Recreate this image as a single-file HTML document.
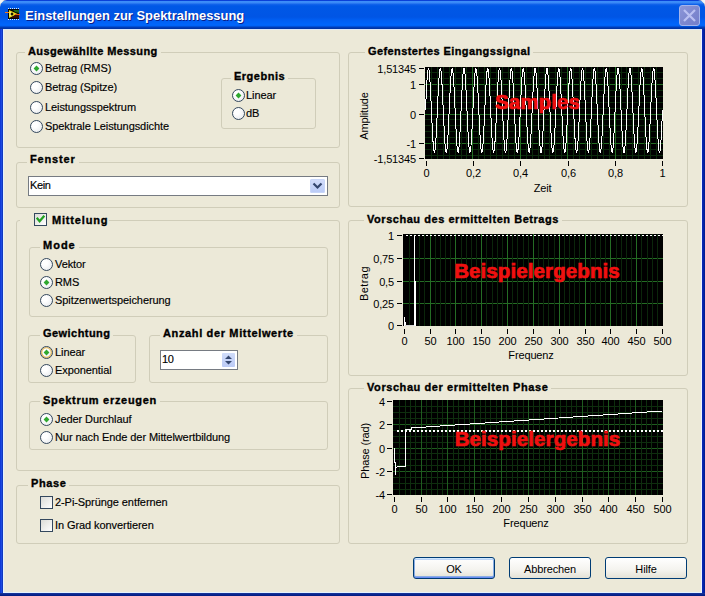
<!DOCTYPE html><html><head><meta charset="utf-8"><style>
*{margin:0;padding:0;box-sizing:border-box}
html,body{width:705px;height:596px;overflow:hidden;background:#ECE9D8}
body{position:relative;font-family:"Liberation Sans",sans-serif;font-size:11px;color:#000}
div,svg{position:absolute}
#tb{left:0;top:0;width:705px;height:29px;border-radius:7px 7px 0 0;
background:linear-gradient(180deg,#0A40D8 0px,#0A40D8 1px,#3D8FFA 1px,#3A88F5 3px,#1565EC 4px,#0058E6 6px,#0055E5 17px,#005EF2 20px,#0066FC 25px,#0060F0 26px,#0040C0 27px,#00309A 29px)}
#title{left:25px;top:7px;line-height:18px;font-size:12.95px;font-weight:700;color:#fff;white-space:nowrap;text-shadow:1px 1px 0 #0A1E8A}
.gb{border:1px solid #D0CDB9;border-radius:3px}
.t,.b{line-height:13px;white-space:nowrap}
.t{letter-spacing:-0.08px;-webkit-text-stroke:0.15px #000}
.b{font-weight:700;letter-spacing:0.55px;-webkit-text-stroke:0.35px #000}
.rd{width:13px;height:13px;border-radius:50%;border:1.2px solid #34485E;background:radial-gradient(circle at 35% 35%,#fff 25%,#EEF0F2 70%,#DCDCD4)}
.rd.hot{box-shadow:inset 0 0 0 1.3px #E8BE60}
.rd svg{left:-1px;top:-1px}
.cb{width:13px;height:13px;border:1px solid #34485E;background:linear-gradient(135deg,#DCDCD7,#fff)}
.combo{border:1px solid #767B82;background:#fff}
.cbtn{right:1px;top:1px;width:15px;height:16px;border:1px solid #B8C8F0;border-radius:2px;background:linear-gradient(180deg,#D8E4FE,#B6C9FA)}
.spin{right:2px;top:1px;width:13px;height:16px;border-radius:2px;background:linear-gradient(180deg,#D8E4FE,#B6C9FA)}
.btn{width:82px;height:22px;border:1px solid #003C74;border-radius:3px;background:linear-gradient(180deg,#FFFFFF,#F4F3EE 60%,#E4E2D6);text-align:center;line-height:22px;letter-spacing:-0.15px}
.btn.def{box-shadow:inset 0 1px 0 #CEE7FF,inset 0 -1px 0 #698CF2,inset 1px 0 0 #89ADE4,inset -1px 0 0 #89ADE4,inset 0 2px 0 #BCD4F6,inset 0 -2px 0 #89ADE4}
.ax{font-family:"Liberation Sans";font-size:11px;letter-spacing:-0.15px;fill:#000}
.red{font-family:"Liberation Sans";font-size:20.5px;font-weight:700;fill:#F01010;stroke:#F01010;stroke-width:0.7px;letter-spacing:0.1px}
</style></head><body><div id="tb"></div>
<div style="position:absolute;left:0;top:29px;width:3px;height:564px;background:linear-gradient(90deg,#0A32D4,#1C4AE0 50%,#0C30B0)"></div>
<div style="position:absolute;left:702px;top:29px;width:3px;height:564px;background:linear-gradient(90deg,#0A2AB8,#0424A8,#001B8E)"></div>
<div style="position:absolute;left:0;top:593px;width:705px;height:3px;background:linear-gradient(180deg,#1A3A9A,#0A2590,#001A80)"></div>
<div style="position:absolute;left:3px;top:29px;width:1px;height:564px;background:#E4F2FF"></div>
<div style="position:absolute;left:701px;top:29px;width:1px;height:564px;background:#EEF4FF"></div>
<div style="position:absolute;left:3px;top:592px;width:699px;height:1px;background:#E4F2FF"></div>
<div style="position:absolute;left:3px;top:29px;width:699px;height:1px;background:#DDE8F8"></div>
<svg style="position:absolute;left:0;top:0" width="24" height="24">
<rect x="8" y="9" width="11" height="10" fill="#050505"/>
<path d="M13 10 L19 10 L19 13 L15 12Z" fill="#1E6A1E"/>
<path d="M9 10 L17.5 14 L9 18 Z" fill="#F0DC18"/>
<path d="M9.5 11.5 L14 14 L9.5 16.5 Z" fill="#FFF27A"/>
<path d="M15 15 L19 15 L19 18 L11 18Z" fill="#3A0A05"/>
<rect x="5" y="12" width="4" height="1" fill="#F07A20"/>
<rect x="15" y="14" width="5" height="1" fill="#E0601A"/>
<path d="M12 12.3 L13.7 14 L12 15.7 L10.3 14Z" fill="#101000"/>
<g fill="#D8E8F8"><rect x="8" y="8" width="1" height="1"/><rect x="10" y="8" width="1" height="1"/><rect x="12" y="8" width="1" height="1"/><rect x="14" y="8" width="1" height="1"/><rect x="16" y="8" width="1" height="1"/><rect x="18" y="8" width="1" height="1"/>
<rect x="8" y="19" width="1" height="1"/><rect x="10" y="19" width="1" height="1"/><rect x="12" y="19" width="1" height="1"/><rect x="14" y="19" width="1" height="1"/><rect x="16" y="19" width="1" height="1"/><rect x="18" y="19" width="1" height="1"/></g>
</svg>
<div id="title">Einstellungen zur Spektralmessung</div>
<div style="position:absolute;left:679px;top:5px;width:21px;height:21px;border:1px solid #A4B4EC;border-radius:3px;background:linear-gradient(135deg,#8C96D8,#7C86CE 60%,#7480CC)"></div>
<svg style="position:absolute;left:679px;top:5px" width="21" height="21"><path d="M5 5 L16 16 M16 5 L5 16" stroke="#BAC0F2" stroke-width="2.2"/></svg>
<div style="position:absolute;left:0;top:0;width:3px;height:3px;background:#F4F4F4;border-bottom-right-radius:3px"></div>
<div style="position:absolute;left:702px;top:0;width:3px;height:3px;background:#F4F4F4;border-bottom-left-radius:3px"></div>
<div class="gb" style="left:16px;top:52px;width:324px;height:96px"></div>
<div class="b" style="left:25px;top:45px;"><span style="background:#ECE9D8;padding:0 3px;letter-spacing:0.4px">Ausgewähllte Messung</span></div>
<div class="rd" style="left:30px;top:62px"><svg width="13" height="13"><path d="M6.5 3.6 L9.4 6.5 L6.5 9.4 L3.6 6.5Z" fill="#2FA82F"/></svg></div>
<div class="t" style="left:45px;top:62px;">Betrag (RMS)</div>
<div class="rd" style="left:30px;top:81px"></div>
<div class="t" style="left:45px;top:81px;">Betrag (Spitze)</div>
<div class="rd" style="left:30px;top:101px"></div>
<div class="t" style="left:45px;top:101px;">Leistungsspektrum</div>
<div class="rd" style="left:30px;top:120px"></div>
<div class="t" style="left:45px;top:120px;">Spektrale Leistungsdichte</div>
<div class="gb" style="left:221px;top:78px;width:95px;height:51px"></div>
<div class="b" style="left:231px;top:70px;"><span style="background:#ECE9D8;padding:0 3px;letter-spacing:0.5px">Ergebnis</span></div>
<div class="rd" style="left:232px;top:89px"><svg width="13" height="13"><path d="M6.5 3.6 L9.4 6.5 L6.5 9.4 L3.6 6.5Z" fill="#2FA82F"/></svg></div>
<div class="t" style="left:246px;top:89px;">Linear</div>
<div class="rd" style="left:232px;top:107px"></div>
<div class="t" style="left:246px;top:107px;">dB</div>
<div class="gb" style="left:16px;top:162px;width:324px;height:46px"></div>
<div class="b" style="left:27px;top:153px;"><span style="background:#ECE9D8;padding:0 3px;letter-spacing:0.85px">Fenster</span></div>
<div class="combo" style="left:28px;top:176px;width:300px;height:20px"><span style="position:absolute;left:1px;top:2px;letter-spacing:-0.4px;-webkit-text-stroke:0.15px #000">Kein</span></div>
<div style="left:310px;top:179px;width:15px;height:14px;border-radius:2px;background:linear-gradient(180deg,#D4DEFB,#B9CAF6);box-shadow:inset 0 0 0 1px #C8D6F8"></div>
<svg style="left:310px;top:179px" width="15" height="14"><path d="M3.5 4.5 L7.5 8.5 L11.5 4.5" stroke="#34466E" stroke-width="2.2" fill="none"/></svg>
<div class="gb" style="left:16px;top:220px;width:324px;height:251px"></div>
<div style="position:absolute;left:20px;top:218px;width:34px;height:6px;background:#ECE9D8"></div>
<div class="cb" style="left:34px;top:213px"><svg width="11" height="11" style="position:absolute;left:0;top:0"><path d="M2.5 4.6 L4.6 7.2 L8.6 2.6" stroke="#21A121" stroke-width="2.3" fill="none" stroke-linecap="square"/></svg></div>
<div class="b" style="left:52px;top:214px;"><span style="background:#ECE9D8;padding:0 1px 0 0;letter-spacing:0.82px">Mittelung</span></div>
<div class="gb" style="left:29px;top:247px;width:299px;height:70px"></div>
<div class="b" style="left:40px;top:239px;"><span style="background:#ECE9D8;padding:0 3px;letter-spacing:1.0px">Mode</span></div>
<div class="rd" style="left:40px;top:258px"></div>
<div class="t" style="left:55px;top:258px;">Vektor</div>
<div class="rd" style="left:40px;top:276px"><svg width="13" height="13"><path d="M6.5 3.6 L9.4 6.5 L6.5 9.4 L3.6 6.5Z" fill="#2FA82F"/></svg></div>
<div class="t" style="left:55px;top:276px;">RMS</div>
<div class="rd" style="left:40px;top:294px"></div>
<div class="t" style="left:55px;top:294px;">Spitzenwertspeicherung</div>
<div class="gb" style="left:28px;top:335px;width:108px;height:48px"></div>
<div class="b" style="left:40px;top:327px;"><span style="background:#ECE9D8;padding:0 3px;letter-spacing:0.45px">Gewichtung</span></div>
<div class="rd hot" style="left:40px;top:346px"><svg width="13" height="13"><path d="M6.5 3.6 L9.4 6.5 L6.5 9.4 L3.6 6.5Z" fill="#2FA82F"/></svg></div>
<div class="t" style="left:55px;top:346px;">Linear</div>
<div class="rd" style="left:40px;top:364px"></div>
<div class="t" style="left:55px;top:364px;">Exponential</div>
<div class="gb" style="left:149px;top:335px;width:179px;height:48px"></div>
<div class="b" style="left:160px;top:327px;"><span style="background:#ECE9D8;padding:0 3px;letter-spacing:0.64px">Anzahl der Mittelwerte</span></div>
<div class="combo" style="left:160px;top:350px;width:78px;height:20px"><span style="position:absolute;left:1px;top:2px;letter-spacing:-0.3px;-webkit-text-stroke:0.15px #000">10</span></div>
<div style="left:222px;top:353px;width:13px;height:14px;border-radius:1px;background:linear-gradient(180deg,#D0DCFA,#BCCBF6)"></div>
<svg style="left:222px;top:353px" width="13" height="14"><path d="M3 6 L6.5 2.5 L10 6Z M3 8 L6.5 11.5 L10 8Z" fill="#34466E"/></svg>
<div class="gb" style="left:29px;top:401px;width:299px;height:49px"></div>
<div class="b" style="left:40px;top:394px;"><span style="background:#ECE9D8;padding:0 3px;letter-spacing:0.7px">Spektrum erzeugen</span></div>
<div class="rd" style="left:40px;top:413px"><svg width="13" height="13"><path d="M6.5 3.6 L9.4 6.5 L6.5 9.4 L3.6 6.5Z" fill="#2FA82F"/></svg></div>
<div class="t" style="left:55px;top:413px;">Jeder Durchlauf</div>
<div class="rd" style="left:40px;top:431px"></div>
<div class="t" style="left:55px;top:431px;">Nur nach Ende der Mittelwertbildung</div>
<div class="gb" style="left:16px;top:485px;width:324px;height:59px"></div>
<div class="b" style="left:28px;top:477px;"><span style="background:#ECE9D8;padding:0 3px;letter-spacing:0.6px">Phase</span></div>
<div class="cb" style="left:40px;top:496px"></div>
<div class="t" style="left:55px;top:496px;">2-Pi-Sprünge entfernen</div>
<div class="cb" style="left:40px;top:519px"></div>
<div class="t" style="left:55px;top:519px;">In Grad konvertieren</div>
<div class="gb" style="left:348px;top:52px;width:340px;height:155px"></div>
<div class="b" style="left:365px;top:45px;"><span style="background:#ECE9D8;padding:0 3px;letter-spacing:0.4px">Gefenstertes Eingangssignal</span></div>
<div class="gb" style="left:348px;top:220px;width:340px;height:156px"></div>
<div class="b" style="left:364px;top:213px;"><span style="background:#ECE9D8;padding:0 3px;letter-spacing:0.54px">Vorschau des ermittelten Betrags</span></div>
<div class="gb" style="left:348px;top:388px;width:340px;height:156px"></div>
<div class="b" style="left:364px;top:381px;"><span style="background:#ECE9D8;padding:0 3px;letter-spacing:0.57px">Vorschau der ermittelten Phase</span></div>
<div class="btn def" style="left:413px;top:557px"><span>OK</span></div>
<div class="btn" style="left:509px;top:557px"><span>Abbrechen</span></div>
<div class="btn" style="left:605px;top:557px"><span>Hilfe</span></div>
<svg style="left:0;top:0" width="705" height="596"><rect x="425" y="67" width="238" height="92" fill="#000"/>
<line x1="425" y1="155.5" x2="663" y2="155.5" stroke="#0C2A0C" stroke-width="1"/>
<line x1="425" y1="149.5" x2="663" y2="149.5" stroke="#0C2A0C" stroke-width="1"/>
<line x1="425" y1="143.5" x2="663" y2="143.5" stroke="#246C24" stroke-width="1"/>
<line x1="425" y1="137.5" x2="663" y2="137.5" stroke="#0C2A0C" stroke-width="1"/>
<line x1="425" y1="131.5" x2="663" y2="131.5" stroke="#0C2A0C" stroke-width="1"/>
<line x1="425" y1="125.5" x2="663" y2="125.5" stroke="#0C2A0C" stroke-width="1"/>
<line x1="425" y1="119.5" x2="663" y2="119.5" stroke="#0C2A0C" stroke-width="1"/>
<line x1="425" y1="114.5" x2="663" y2="114.5" stroke="#246C24" stroke-width="1"/>
<line x1="425" y1="108.5" x2="663" y2="108.5" stroke="#0C2A0C" stroke-width="1"/>
<line x1="425" y1="102.5" x2="663" y2="102.5" stroke="#0C2A0C" stroke-width="1"/>
<line x1="425" y1="96.5" x2="663" y2="96.5" stroke="#0C2A0C" stroke-width="1"/>
<line x1="425" y1="90.5" x2="663" y2="90.5" stroke="#0C2A0C" stroke-width="1"/>
<line x1="425" y1="84.5" x2="663" y2="84.5" stroke="#246C24" stroke-width="1"/>
<line x1="425" y1="78.5" x2="663" y2="78.5" stroke="#0C2A0C" stroke-width="1"/>
<line x1="425" y1="72.5" x2="663" y2="72.5" stroke="#0C2A0C" stroke-width="1"/>
<line x1="431.5" y1="67" x2="431.5" y2="159" stroke="#0C2A0C" stroke-width="1"/>
<line x1="437.5" y1="67" x2="437.5" y2="159" stroke="#0C2A0C" stroke-width="1"/>
<line x1="443.5" y1="67" x2="443.5" y2="159" stroke="#0C2A0C" stroke-width="1"/>
<line x1="449.5" y1="67" x2="449.5" y2="159" stroke="#0C2A0C" stroke-width="1"/>
<line x1="455.5" y1="67" x2="455.5" y2="159" stroke="#0C2A0C" stroke-width="1"/>
<line x1="461.5" y1="67" x2="461.5" y2="159" stroke="#0C2A0C" stroke-width="1"/>
<line x1="466.5" y1="67" x2="466.5" y2="159" stroke="#0C2A0C" stroke-width="1"/>
<line x1="472.5" y1="67" x2="472.5" y2="159" stroke="#246C24" stroke-width="1"/>
<line x1="478.5" y1="67" x2="478.5" y2="159" stroke="#0C2A0C" stroke-width="1"/>
<line x1="484.5" y1="67" x2="484.5" y2="159" stroke="#0C2A0C" stroke-width="1"/>
<line x1="490.5" y1="67" x2="490.5" y2="159" stroke="#0C2A0C" stroke-width="1"/>
<line x1="496.5" y1="67" x2="496.5" y2="159" stroke="#0C2A0C" stroke-width="1"/>
<line x1="502.5" y1="67" x2="502.5" y2="159" stroke="#0C2A0C" stroke-width="1"/>
<line x1="508.5" y1="67" x2="508.5" y2="159" stroke="#0C2A0C" stroke-width="1"/>
<line x1="514.5" y1="67" x2="514.5" y2="159" stroke="#0C2A0C" stroke-width="1"/>
<line x1="520.5" y1="67" x2="520.5" y2="159" stroke="#246C24" stroke-width="1"/>
<line x1="526.5" y1="67" x2="526.5" y2="159" stroke="#0C2A0C" stroke-width="1"/>
<line x1="532.5" y1="67" x2="532.5" y2="159" stroke="#0C2A0C" stroke-width="1"/>
<line x1="538.5" y1="67" x2="538.5" y2="159" stroke="#0C2A0C" stroke-width="1"/>
<line x1="544.5" y1="67" x2="544.5" y2="159" stroke="#0C2A0C" stroke-width="1"/>
<line x1="549.5" y1="67" x2="549.5" y2="159" stroke="#0C2A0C" stroke-width="1"/>
<line x1="555.5" y1="67" x2="555.5" y2="159" stroke="#0C2A0C" stroke-width="1"/>
<line x1="561.5" y1="67" x2="561.5" y2="159" stroke="#0C2A0C" stroke-width="1"/>
<line x1="567.5" y1="67" x2="567.5" y2="159" stroke="#246C24" stroke-width="1"/>
<line x1="573.5" y1="67" x2="573.5" y2="159" stroke="#0C2A0C" stroke-width="1"/>
<line x1="579.5" y1="67" x2="579.5" y2="159" stroke="#0C2A0C" stroke-width="1"/>
<line x1="585.5" y1="67" x2="585.5" y2="159" stroke="#0C2A0C" stroke-width="1"/>
<line x1="591.5" y1="67" x2="591.5" y2="159" stroke="#0C2A0C" stroke-width="1"/>
<line x1="597.5" y1="67" x2="597.5" y2="159" stroke="#0C2A0C" stroke-width="1"/>
<line x1="603.5" y1="67" x2="603.5" y2="159" stroke="#0C2A0C" stroke-width="1"/>
<line x1="609.5" y1="67" x2="609.5" y2="159" stroke="#0C2A0C" stroke-width="1"/>
<line x1="615.5" y1="67" x2="615.5" y2="159" stroke="#246C24" stroke-width="1"/>
<line x1="621.5" y1="67" x2="621.5" y2="159" stroke="#0C2A0C" stroke-width="1"/>
<line x1="626.5" y1="67" x2="626.5" y2="159" stroke="#0C2A0C" stroke-width="1"/>
<line x1="632.5" y1="67" x2="632.5" y2="159" stroke="#0C2A0C" stroke-width="1"/>
<line x1="638.5" y1="67" x2="638.5" y2="159" stroke="#0C2A0C" stroke-width="1"/>
<line x1="644.5" y1="67" x2="644.5" y2="159" stroke="#0C2A0C" stroke-width="1"/>
<line x1="650.5" y1="67" x2="650.5" y2="159" stroke="#0C2A0C" stroke-width="1"/>
<line x1="656.5" y1="67" x2="656.5" y2="159" stroke="#0C2A0C" stroke-width="1"/>
<polyline points="425.50,110.38 425.74,105.13 425.97,99.97 426.21,94.97 426.45,90.21 426.69,85.77 426.92,81.71 427.16,78.11 427.40,75.02 427.63,72.49 427.87,70.55 428.11,69.25 428.34,68.59 428.58,68.59 428.82,69.25 429.06,70.55 429.29,72.49 429.53,75.02 429.77,78.11 430.00,81.71 430.24,85.77 430.48,90.21 430.71,94.97 430.95,99.97 431.19,105.13 431.43,110.38 431.66,115.63 431.90,120.80 432.14,125.80 432.37,130.56 432.61,135.00 432.85,139.05 433.08,142.65 433.32,145.74 433.56,148.27 433.80,150.21 434.03,151.52 434.27,152.18 434.51,152.18 434.74,151.52 434.98,150.21 435.22,148.27 435.45,145.74 435.69,142.65 435.93,139.05 436.17,135.00 436.40,130.56 436.64,125.80 436.88,120.80 437.11,115.63 437.35,110.38 437.59,105.13 437.82,99.97 438.06,94.97 438.30,90.21 438.54,85.77 438.77,81.71 439.01,78.11 439.25,75.02 439.48,72.49 439.72,70.55 439.96,69.25 440.19,68.59 440.43,68.59 440.67,69.25 440.90,70.55 441.14,72.49 441.38,75.02 441.62,78.11 441.85,81.71 442.09,85.77 442.33,90.21 442.56,94.97 442.80,99.97 443.04,105.13 443.27,110.38 443.51,115.63 443.75,120.80 443.99,125.80 444.22,130.56 444.46,135.00 444.70,139.05 444.93,142.65 445.17,145.74 445.41,148.27 445.64,150.21 445.88,151.52 446.12,152.18 446.36,152.18 446.59,151.52 446.83,150.21 447.07,148.27 447.30,145.74 447.54,142.65 447.78,139.05 448.01,135.00 448.25,130.56 448.49,125.80 448.73,120.80 448.96,115.63 449.20,110.38 449.44,105.13 449.67,99.97 449.91,94.97 450.15,90.21 450.38,85.77 450.62,81.71 450.86,78.11 451.10,75.02 451.33,72.49 451.57,70.55 451.81,69.25 452.04,68.59 452.28,68.59 452.52,69.25 452.75,70.55 452.99,72.49 453.23,75.02 453.47,78.11 453.70,81.71 453.94,85.77 454.18,90.21 454.41,94.97 454.65,99.97 454.89,105.13 455.12,110.38 455.36,115.63 455.60,120.80 455.84,125.80 456.07,130.56 456.31,135.00 456.55,139.05 456.78,142.65 457.02,145.74 457.26,148.27 457.50,150.21 457.73,151.52 457.97,152.18 458.21,152.18 458.44,151.52 458.68,150.21 458.92,148.27 459.15,145.74 459.39,142.65 459.63,139.05 459.87,135.00 460.10,130.56 460.34,125.80 460.58,120.80 460.81,115.63 461.05,110.38 461.29,105.13 461.52,99.97 461.76,94.97 462.00,90.21 462.24,85.77 462.47,81.71 462.71,78.11 462.95,75.02 463.18,72.49 463.42,70.55 463.66,69.25 463.89,68.59 464.13,68.59 464.37,69.25 464.61,70.55 464.84,72.49 465.08,75.02 465.32,78.11 465.55,81.71 465.79,85.77 466.03,90.21 466.26,94.97 466.50,99.97 466.74,105.13 466.98,110.38 467.21,115.63 467.45,120.80 467.69,125.80 467.92,130.56 468.16,135.00 468.40,139.05 468.63,142.65 468.87,145.74 469.11,148.27 469.35,150.21 469.58,151.52 469.82,152.18 470.06,152.18 470.29,151.52 470.53,150.21 470.77,148.27 471.00,145.74 471.24,142.65 471.48,139.05 471.72,135.00 471.95,130.56 472.19,125.80 472.43,120.80 472.66,115.63 472.90,110.38 473.14,105.13 473.37,99.97 473.61,94.97 473.85,90.21 474.08,85.77 474.32,81.71 474.56,78.11 474.80,75.02 475.03,72.49 475.27,70.55 475.51,69.25 475.74,68.59 475.98,68.59 476.22,69.25 476.45,70.55 476.69,72.49 476.93,75.02 477.17,78.11 477.40,81.71 477.64,85.77 477.88,90.21 478.11,94.97 478.35,99.97 478.59,105.13 478.82,110.38 479.06,115.63 479.30,120.80 479.54,125.80 479.77,130.56 480.01,135.00 480.25,139.05 480.48,142.65 480.72,145.74 480.96,148.27 481.19,150.21 481.43,151.52 481.67,152.18 481.91,152.18 482.14,151.52 482.38,150.21 482.62,148.27 482.85,145.74 483.09,142.65 483.33,139.05 483.56,135.00 483.80,130.56 484.04,125.80 484.28,120.80 484.51,115.63 484.75,110.38 484.99,105.13 485.22,99.97 485.46,94.97 485.70,90.21 485.94,85.77 486.17,81.71 486.41,78.11 486.65,75.02 486.88,72.49 487.12,70.55 487.36,69.25 487.59,68.59 487.83,68.59 488.07,69.25 488.31,70.55 488.54,72.49 488.78,75.02 489.02,78.11 489.25,81.71 489.49,85.77 489.73,90.21 489.96,94.97 490.20,99.97 490.44,105.13 490.68,110.38 490.91,115.63 491.15,120.80 491.39,125.80 491.62,130.56 491.86,135.00 492.10,139.05 492.33,142.65 492.57,145.74 492.81,148.27 493.04,150.21 493.28,151.52 493.52,152.18 493.76,152.18 493.99,151.52 494.23,150.21 494.47,148.27 494.70,145.74 494.94,142.65 495.18,139.05 495.41,135.00 495.65,130.56 495.89,125.80 496.13,120.80 496.36,115.63 496.60,110.38 496.84,105.13 497.07,99.97 497.31,94.97 497.55,90.21 497.78,85.77 498.02,81.71 498.26,78.11 498.50,75.02 498.73,72.49 498.97,70.55 499.21,69.25 499.44,68.59 499.68,68.59 499.92,69.25 500.15,70.55 500.39,72.49 500.63,75.02 500.87,78.11 501.10,81.71 501.34,85.77 501.58,90.21 501.81,94.97 502.05,99.97 502.29,105.13 502.52,110.38 502.76,115.63 503.00,120.80 503.24,125.80 503.47,130.56 503.71,135.00 503.95,139.05 504.18,142.65 504.42,145.74 504.66,148.27 504.89,150.21 505.13,151.52 505.37,152.18 505.61,152.18 505.84,151.52 506.08,150.21 506.32,148.27 506.55,145.74 506.79,142.65 507.03,139.05 507.26,135.00 507.50,130.56 507.74,125.80 507.98,120.80 508.21,115.63 508.45,110.38 508.69,105.13 508.92,99.97 509.16,94.97 509.40,90.21 509.63,85.77 509.87,81.71 510.11,78.11 510.35,75.02 510.58,72.49 510.82,70.55 511.06,69.25 511.29,68.59 511.53,68.59 511.77,69.25 512.00,70.55 512.24,72.49 512.48,75.02 512.72,78.11 512.95,81.71 513.19,85.77 513.43,90.21 513.66,94.97 513.90,99.97 514.14,105.13 514.38,110.38 514.61,115.63 514.85,120.80 515.09,125.80 515.32,130.56 515.56,135.00 515.80,139.05 516.03,142.65 516.27,145.74 516.51,148.27 516.75,150.21 516.98,151.52 517.22,152.18 517.46,152.18 517.69,151.52 517.93,150.21 518.17,148.27 518.40,145.74 518.64,142.65 518.88,139.05 519.12,135.00 519.35,130.56 519.59,125.80 519.83,120.80 520.06,115.63 520.30,110.38 520.54,105.13 520.77,99.97 521.01,94.97 521.25,90.21 521.49,85.77 521.72,81.71 521.96,78.11 522.20,75.02 522.43,72.49 522.67,70.55 522.91,69.25 523.14,68.59 523.38,68.59 523.62,69.25 523.86,70.55 524.09,72.49 524.33,75.02 524.57,78.11 524.80,81.71 525.04,85.77 525.28,90.21 525.51,94.97 525.75,99.97 525.99,105.13 526.23,110.38 526.46,115.63 526.70,120.80 526.94,125.80 527.17,130.56 527.41,135.00 527.65,139.05 527.88,142.65 528.12,145.74 528.36,148.27 528.60,150.21 528.83,151.52 529.07,152.18 529.31,152.18 529.54,151.52 529.78,150.21 530.02,148.27 530.25,145.74 530.49,142.65 530.73,139.05 530.97,135.00 531.20,130.56 531.44,125.80 531.68,120.80 531.91,115.63 532.15,110.38 532.39,105.13 532.62,99.97 532.86,94.97 533.10,90.21 533.34,85.77 533.57,81.71 533.81,78.11 534.05,75.02 534.28,72.49 534.52,70.55 534.76,69.25 534.99,68.59 535.23,68.59 535.47,69.25 535.71,70.55 535.94,72.49 536.18,75.02 536.42,78.11 536.65,81.71 536.89,85.77 537.13,90.21 537.36,94.97 537.60,99.97 537.84,105.13 538.08,110.38 538.31,115.63 538.55,120.80 538.79,125.80 539.02,130.56 539.26,135.00 539.50,139.05 539.73,142.65 539.97,145.74 540.21,148.27 540.44,150.21 540.68,151.52 540.92,152.18 541.16,152.18 541.39,151.52 541.63,150.21 541.87,148.27 542.10,145.74 542.34,142.65 542.58,139.05 542.82,135.00 543.05,130.56 543.29,125.80 543.53,120.80 543.76,115.63 544.00,110.38 544.24,105.13 544.47,99.97 544.71,94.97 544.95,90.21 545.18,85.77 545.42,81.71 545.66,78.11 545.90,75.02 546.13,72.49 546.37,70.55 546.61,69.25 546.84,68.59 547.08,68.59 547.32,69.25 547.56,70.55 547.79,72.49 548.03,75.02 548.27,78.11 548.50,81.71 548.74,85.77 548.98,90.21 549.21,94.97 549.45,99.97 549.69,105.13 549.92,110.38 550.16,115.63 550.40,120.80 550.64,125.80 550.87,130.56 551.11,135.00 551.35,139.05 551.58,142.65 551.82,145.74 552.06,148.27 552.29,150.21 552.53,151.52 552.77,152.18 553.01,152.18 553.24,151.52 553.48,150.21 553.72,148.27 553.95,145.74 554.19,142.65 554.43,139.05 554.66,135.00 554.90,130.56 555.14,125.80 555.38,120.80 555.61,115.63 555.85,110.38 556.09,105.13 556.32,99.97 556.56,94.97 556.80,90.21 557.04,85.77 557.27,81.71 557.51,78.11 557.75,75.02 557.98,72.49 558.22,70.55 558.46,69.25 558.69,68.59 558.93,68.59 559.17,69.25 559.40,70.55 559.64,72.49 559.88,75.02 560.12,78.11 560.35,81.71 560.59,85.77 560.83,90.21 561.06,94.97 561.30,99.97 561.54,105.13 561.77,110.38 562.01,115.63 562.25,120.80 562.49,125.80 562.72,130.56 562.96,135.00 563.20,139.05 563.43,142.65 563.67,145.74 563.91,148.27 564.14,150.21 564.38,151.52 564.62,152.18 564.86,152.18 565.09,151.52 565.33,150.21 565.57,148.27 565.80,145.74 566.04,142.65 566.28,139.05 566.51,135.00 566.75,130.56 566.99,125.80 567.23,120.80 567.46,115.63 567.70,110.38 567.94,105.13 568.17,99.97 568.41,94.97 568.65,90.21 568.88,85.77 569.12,81.71 569.36,78.11 569.60,75.02 569.83,72.49 570.07,70.55 570.31,69.25 570.54,68.59 570.78,68.59 571.02,69.25 571.25,70.55 571.49,72.49 571.73,75.02 571.97,78.11 572.20,81.71 572.44,85.77 572.68,90.21 572.91,94.97 573.15,99.97 573.39,105.13 573.62,110.38 573.86,115.63 574.10,120.80 574.34,125.80 574.57,130.56 574.81,135.00 575.05,139.05 575.28,142.65 575.52,145.74 575.76,148.27 576.00,150.21 576.23,151.52 576.47,152.18 576.71,152.18 576.94,151.52 577.18,150.21 577.42,148.27 577.65,145.74 577.89,142.65 578.13,139.05 578.37,135.00 578.60,130.56 578.84,125.80 579.08,120.80 579.31,115.63 579.55,110.38 579.79,105.13 580.02,99.97 580.26,94.97 580.50,90.21 580.74,85.77 580.97,81.71 581.21,78.11 581.45,75.02 581.68,72.49 581.92,70.55 582.16,69.25 582.39,68.59 582.63,68.59 582.87,69.25 583.11,70.55 583.34,72.49 583.58,75.02 583.82,78.11 584.05,81.71 584.29,85.77 584.53,90.21 584.76,94.97 585.00,99.97 585.24,105.13 585.48,110.38 585.71,115.63 585.95,120.80 586.19,125.80 586.42,130.56 586.66,135.00 586.90,139.05 587.13,142.65 587.37,145.74 587.61,148.27 587.85,150.21 588.08,151.52 588.32,152.18 588.56,152.18 588.79,151.52 589.03,150.21 589.27,148.27 589.50,145.74 589.74,142.65 589.98,139.05 590.21,135.00 590.45,130.56 590.69,125.80 590.93,120.80 591.16,115.63 591.40,110.38 591.64,105.13 591.87,99.97 592.11,94.97 592.35,90.21 592.59,85.77 592.82,81.71 593.06,78.11 593.30,75.02 593.53,72.49 593.77,70.55 594.01,69.25 594.24,68.59 594.48,68.59 594.72,69.25 594.95,70.55 595.19,72.49 595.43,75.02 595.67,78.11 595.90,81.71 596.14,85.77 596.38,90.21 596.61,94.97 596.85,99.97 597.09,105.13 597.33,110.38 597.56,115.63 597.80,120.80 598.04,125.80 598.27,130.56 598.51,135.00 598.75,139.05 598.98,142.65 599.22,145.74 599.46,148.27 599.69,150.21 599.93,151.52 600.17,152.18 600.41,152.18 600.64,151.52 600.88,150.21 601.12,148.27 601.35,145.74 601.59,142.65 601.83,139.05 602.07,135.00 602.30,130.56 602.54,125.80 602.78,120.80 603.01,115.63 603.25,110.38 603.49,105.13 603.72,99.97 603.96,94.97 604.20,90.21 604.43,85.77 604.67,81.71 604.91,78.11 605.15,75.02 605.38,72.49 605.62,70.55 605.86,69.25 606.09,68.59 606.33,68.59 606.57,69.25 606.81,70.55 607.04,72.49 607.28,75.02 607.52,78.11 607.75,81.71 607.99,85.77 608.23,90.21 608.46,94.97 608.70,99.97 608.94,105.13 609.17,110.38 609.41,115.63 609.65,120.80 609.89,125.80 610.12,130.56 610.36,135.00 610.60,139.05 610.83,142.65 611.07,145.74 611.31,148.27 611.55,150.21 611.78,151.52 612.02,152.18 612.26,152.18 612.49,151.52 612.73,150.21 612.97,148.27 613.20,145.74 613.44,142.65 613.68,139.05 613.91,135.00 614.15,130.56 614.39,125.80 614.63,120.80 614.86,115.63 615.10,110.38 615.34,105.13 615.57,99.97 615.81,94.97 616.05,90.21 616.29,85.77 616.52,81.71 616.76,78.11 617.00,75.02 617.23,72.49 617.47,70.55 617.71,69.25 617.94,68.59 618.18,68.59 618.42,69.25 618.65,70.55 618.89,72.49 619.13,75.02 619.37,78.11 619.60,81.71 619.84,85.77 620.08,90.21 620.31,94.97 620.55,99.97 620.79,105.13 621.02,110.38 621.26,115.63 621.50,120.80 621.74,125.80 621.97,130.56 622.21,135.00 622.45,139.05 622.68,142.65 622.92,145.74 623.16,148.27 623.39,150.21 623.63,151.52 623.87,152.18 624.11,152.18 624.34,151.52 624.58,150.21 624.82,148.27 625.05,145.74 625.29,142.65 625.53,139.05 625.76,135.00 626.00,130.56 626.24,125.80 626.48,120.80 626.71,115.63 626.95,110.38 627.19,105.13 627.42,99.97 627.66,94.97 627.90,90.21 628.13,85.77 628.37,81.71 628.61,78.11 628.85,75.02 629.08,72.49 629.32,70.55 629.56,69.25 629.79,68.59 630.03,68.59 630.27,69.25 630.50,70.55 630.74,72.49 630.98,75.02 631.22,78.11 631.45,81.71 631.69,85.77 631.93,90.21 632.16,94.97 632.40,99.97 632.64,105.13 632.88,110.38 633.11,115.63 633.35,120.80 633.59,125.80 633.82,130.56 634.06,135.00 634.30,139.05 634.53,142.65 634.77,145.74 635.01,148.27 635.25,150.21 635.48,151.52 635.72,152.18 635.96,152.18 636.19,151.52 636.43,150.21 636.67,148.27 636.90,145.74 637.14,142.65 637.38,139.05 637.62,135.00 637.85,130.56 638.09,125.80 638.33,120.80 638.56,115.63 638.80,110.38 639.04,105.13 639.27,99.97 639.51,94.97 639.75,90.21 639.99,85.77 640.22,81.71 640.46,78.11 640.70,75.02 640.93,72.49 641.17,70.55 641.41,69.25 641.64,68.59 641.88,68.59 642.12,69.25 642.36,70.55 642.59,72.49 642.83,75.02 643.07,78.11 643.30,81.71 643.54,85.77 643.78,90.21 644.01,94.97 644.25,99.97 644.49,105.13 644.73,110.38 644.96,115.63 645.20,120.80 645.44,125.80 645.67,130.56 645.91,135.00 646.15,139.05 646.38,142.65 646.62,145.74 646.86,148.27 647.10,150.21 647.33,151.52 647.57,152.18 647.81,152.18 648.04,151.52 648.28,150.21 648.52,148.27 648.75,145.74 648.99,142.65 649.23,139.05 649.46,135.00 649.70,130.56 649.94,125.80 650.18,120.80 650.41,115.63 650.65,110.38 650.89,105.13 651.12,99.97 651.36,94.97 651.60,90.21 651.84,85.77 652.07,81.71 652.31,78.11 652.55,75.02 652.78,72.49 653.02,70.55 653.26,69.25 653.49,68.59 653.73,68.59 653.97,69.25 654.20,70.55 654.44,72.49 654.68,75.02 654.92,78.11 655.15,81.71 655.39,85.77 655.63,90.21 655.86,94.97 656.10,99.97 656.34,105.13 656.58,110.38 656.81,115.63 657.05,120.80 657.29,125.80 657.52,130.56 657.76,135.00 658.00,139.05 658.23,142.65 658.47,145.74 658.71,148.27 658.94,150.21 659.18,151.52 659.42,152.18 659.66,152.18 659.89,151.52 660.13,150.21 660.37,148.27 660.60,145.74 660.84,142.65 661.08,139.05 661.32,135.00 661.55,130.56 661.79,125.80 662.03,120.80 662.26,115.63 662.50,110.38" fill="none" stroke="#fff" stroke-width="1" shape-rendering="crispEdges"/><text x="537.5" y="109" text-anchor="middle" class="red">Samples</text><line x1="419" y1="68.5" x2="424" y2="68.5" stroke="#000" stroke-width="1"/><text x="416" y="72.5" text-anchor="end" class="ax">1,51345</text><line x1="419" y1="84.5" x2="424" y2="84.5" stroke="#000" stroke-width="1"/><text x="416" y="88.5" text-anchor="end" class="ax">1</text><line x1="419" y1="114.5" x2="424" y2="114.5" stroke="#000" stroke-width="1"/><text x="416" y="118.5" text-anchor="end" class="ax">0</text><line x1="419" y1="143.5" x2="424" y2="143.5" stroke="#000" stroke-width="1"/><text x="416" y="147.5" text-anchor="end" class="ax">-1</text><line x1="419" y1="158.5" x2="424" y2="158.5" stroke="#000" stroke-width="1"/><text x="416" y="162.5" text-anchor="end" class="ax">-1,51345</text><line x1="426.5" y1="161" x2="426.5" y2="166" stroke="#000" stroke-width="1"/><text x="426.5" y="177" text-anchor="middle" class="ax">0</text><line x1="473.5" y1="161" x2="473.5" y2="166" stroke="#000" stroke-width="1"/><text x="473.5" y="177" text-anchor="middle" class="ax">0,2</text><line x1="520.5" y1="161" x2="520.5" y2="166" stroke="#000" stroke-width="1"/><text x="520.5" y="177" text-anchor="middle" class="ax">0,4</text><line x1="568.5" y1="161" x2="568.5" y2="166" stroke="#000" stroke-width="1"/><text x="568.5" y="177" text-anchor="middle" class="ax">0,6</text><line x1="615.5" y1="161" x2="615.5" y2="166" stroke="#000" stroke-width="1"/><text x="615.5" y="177" text-anchor="middle" class="ax">0,8</text><line x1="662.5" y1="161" x2="662.5" y2="166" stroke="#000" stroke-width="1"/><text x="662.5" y="177" text-anchor="middle" class="ax">1</text><text x="542.5" y="192" text-anchor="middle" class="ax">Zeit</text><text transform="translate(368,116) rotate(-90)" text-anchor="middle" class="ax">Amplitude</text>
<rect x="403" y="234" width="260" height="92" fill="#000"/>
<line x1="403" y1="258.5" x2="663" y2="258.5" stroke="#246C24" stroke-width="1"/>
<line x1="403" y1="281.5" x2="663" y2="281.5" stroke="#246C24" stroke-width="1"/>
<line x1="403" y1="303.5" x2="663" y2="303.5" stroke="#246C24" stroke-width="1"/>
<line x1="409.5" y1="234" x2="409.5" y2="326" stroke="#0B260B" stroke-width="1"/>
<line x1="414.5" y1="234" x2="414.5" y2="326" stroke="#0B260B" stroke-width="1"/>
<line x1="419.5" y1="234" x2="419.5" y2="326" stroke="#0B260B" stroke-width="1"/>
<line x1="424.5" y1="234" x2="424.5" y2="326" stroke="#0B260B" stroke-width="1"/>
<line x1="430.5" y1="234" x2="430.5" y2="326" stroke="#246C24" stroke-width="1"/>
<line x1="435.5" y1="234" x2="435.5" y2="326" stroke="#0B260B" stroke-width="1"/>
<line x1="440.5" y1="234" x2="440.5" y2="326" stroke="#0B260B" stroke-width="1"/>
<line x1="445.5" y1="234" x2="445.5" y2="326" stroke="#0B260B" stroke-width="1"/>
<line x1="450.5" y1="234" x2="450.5" y2="326" stroke="#0B260B" stroke-width="1"/>
<line x1="455.5" y1="234" x2="455.5" y2="326" stroke="#246C24" stroke-width="1"/>
<line x1="461.5" y1="234" x2="461.5" y2="326" stroke="#0B260B" stroke-width="1"/>
<line x1="466.5" y1="234" x2="466.5" y2="326" stroke="#0B260B" stroke-width="1"/>
<line x1="471.5" y1="234" x2="471.5" y2="326" stroke="#0B260B" stroke-width="1"/>
<line x1="476.5" y1="234" x2="476.5" y2="326" stroke="#0B260B" stroke-width="1"/>
<line x1="481.5" y1="234" x2="481.5" y2="326" stroke="#246C24" stroke-width="1"/>
<line x1="486.5" y1="234" x2="486.5" y2="326" stroke="#0B260B" stroke-width="1"/>
<line x1="492.5" y1="234" x2="492.5" y2="326" stroke="#0B260B" stroke-width="1"/>
<line x1="497.5" y1="234" x2="497.5" y2="326" stroke="#0B260B" stroke-width="1"/>
<line x1="502.5" y1="234" x2="502.5" y2="326" stroke="#0B260B" stroke-width="1"/>
<line x1="507.5" y1="234" x2="507.5" y2="326" stroke="#246C24" stroke-width="1"/>
<line x1="512.5" y1="234" x2="512.5" y2="326" stroke="#0B260B" stroke-width="1"/>
<line x1="517.5" y1="234" x2="517.5" y2="326" stroke="#0B260B" stroke-width="1"/>
<line x1="523.5" y1="234" x2="523.5" y2="326" stroke="#0B260B" stroke-width="1"/>
<line x1="528.5" y1="234" x2="528.5" y2="326" stroke="#0B260B" stroke-width="1"/>
<line x1="533.5" y1="234" x2="533.5" y2="326" stroke="#246C24" stroke-width="1"/>
<line x1="538.5" y1="234" x2="538.5" y2="326" stroke="#0B260B" stroke-width="1"/>
<line x1="543.5" y1="234" x2="543.5" y2="326" stroke="#0B260B" stroke-width="1"/>
<line x1="548.5" y1="234" x2="548.5" y2="326" stroke="#0B260B" stroke-width="1"/>
<line x1="554.5" y1="234" x2="554.5" y2="326" stroke="#0B260B" stroke-width="1"/>
<line x1="559.5" y1="234" x2="559.5" y2="326" stroke="#246C24" stroke-width="1"/>
<line x1="564.5" y1="234" x2="564.5" y2="326" stroke="#0B260B" stroke-width="1"/>
<line x1="569.5" y1="234" x2="569.5" y2="326" stroke="#0B260B" stroke-width="1"/>
<line x1="574.5" y1="234" x2="574.5" y2="326" stroke="#0B260B" stroke-width="1"/>
<line x1="579.5" y1="234" x2="579.5" y2="326" stroke="#0B260B" stroke-width="1"/>
<line x1="585.5" y1="234" x2="585.5" y2="326" stroke="#246C24" stroke-width="1"/>
<line x1="590.5" y1="234" x2="590.5" y2="326" stroke="#0B260B" stroke-width="1"/>
<line x1="595.5" y1="234" x2="595.5" y2="326" stroke="#0B260B" stroke-width="1"/>
<line x1="600.5" y1="234" x2="600.5" y2="326" stroke="#0B260B" stroke-width="1"/>
<line x1="605.5" y1="234" x2="605.5" y2="326" stroke="#0B260B" stroke-width="1"/>
<line x1="610.5" y1="234" x2="610.5" y2="326" stroke="#246C24" stroke-width="1"/>
<line x1="616.5" y1="234" x2="616.5" y2="326" stroke="#0B260B" stroke-width="1"/>
<line x1="621.5" y1="234" x2="621.5" y2="326" stroke="#0B260B" stroke-width="1"/>
<line x1="626.5" y1="234" x2="626.5" y2="326" stroke="#0B260B" stroke-width="1"/>
<line x1="631.5" y1="234" x2="631.5" y2="326" stroke="#0B260B" stroke-width="1"/>
<line x1="636.5" y1="234" x2="636.5" y2="326" stroke="#246C24" stroke-width="1"/>
<line x1="641.5" y1="234" x2="641.5" y2="326" stroke="#0B260B" stroke-width="1"/>
<line x1="647.5" y1="234" x2="647.5" y2="326" stroke="#0B260B" stroke-width="1"/>
<line x1="652.5" y1="234" x2="652.5" y2="326" stroke="#0B260B" stroke-width="1"/>
<line x1="657.5" y1="234" x2="657.5" y2="326" stroke="#0B260B" stroke-width="1"/>
<rect x="414" y="235" width="1" height="91" fill="#fff"/><rect x="415" y="281" width="1" height="45" fill="#fff"/><rect x="404" y="317" width="1" height="9" fill="#fff"/><rect x="405" y="322" width="1" height="4" fill="#fff"/><rect x="405" y="325" width="9" height="1" fill="#d8d8d8"/><line x1="406" y1="235.5" x2="663" y2="235.5" stroke="#fff" stroke-width="1" stroke-dasharray="2,2"/><text x="537" y="278" text-anchor="middle" class="red">Beispielergebnis</text><line x1="397" y1="235.5" x2="402" y2="235.5" stroke="#000" stroke-width="1"/><text x="394" y="239.5" text-anchor="end" class="ax">1</text><line x1="397" y1="258.5" x2="402" y2="258.5" stroke="#000" stroke-width="1"/><text x="394" y="262.5" text-anchor="end" class="ax">0,75</text><line x1="397" y1="281.5" x2="402" y2="281.5" stroke="#000" stroke-width="1"/><text x="394" y="285.5" text-anchor="end" class="ax">0,5</text><line x1="397" y1="303.5" x2="402" y2="303.5" stroke="#000" stroke-width="1"/><text x="394" y="307.5" text-anchor="end" class="ax">0,25</text><line x1="397" y1="325.5" x2="402" y2="325.5" stroke="#000" stroke-width="1"/><text x="394" y="329.5" text-anchor="end" class="ax">0</text><line x1="404.5" y1="329" x2="404.5" y2="334" stroke="#000" stroke-width="1"/><text x="404.5" y="345" text-anchor="middle" class="ax">0</text><line x1="430.5" y1="329" x2="430.5" y2="334" stroke="#000" stroke-width="1"/><text x="430.5" y="345" text-anchor="middle" class="ax">50</text><line x1="455.5" y1="329" x2="455.5" y2="334" stroke="#000" stroke-width="1"/><text x="455.5" y="345" text-anchor="middle" class="ax">100</text><line x1="481.5" y1="329" x2="481.5" y2="334" stroke="#000" stroke-width="1"/><text x="481.5" y="345" text-anchor="middle" class="ax">150</text><line x1="507.5" y1="329" x2="507.5" y2="334" stroke="#000" stroke-width="1"/><text x="507.5" y="345" text-anchor="middle" class="ax">200</text><line x1="533.5" y1="329" x2="533.5" y2="334" stroke="#000" stroke-width="1"/><text x="533.5" y="345" text-anchor="middle" class="ax">250</text><line x1="559.5" y1="329" x2="559.5" y2="334" stroke="#000" stroke-width="1"/><text x="559.5" y="345" text-anchor="middle" class="ax">300</text><line x1="585.5" y1="329" x2="585.5" y2="334" stroke="#000" stroke-width="1"/><text x="585.5" y="345" text-anchor="middle" class="ax">350</text><line x1="610.5" y1="329" x2="610.5" y2="334" stroke="#000" stroke-width="1"/><text x="610.5" y="345" text-anchor="middle" class="ax">400</text><line x1="636.5" y1="329" x2="636.5" y2="334" stroke="#000" stroke-width="1"/><text x="636.5" y="345" text-anchor="middle" class="ax">450</text><line x1="662.5" y1="329" x2="662.5" y2="334" stroke="#000" stroke-width="1"/><text x="662.5" y="345" text-anchor="middle" class="ax">500</text><text x="531" y="359" text-anchor="middle" class="ax">Frequenz</text><text transform="translate(368,283.5) rotate(-90)" text-anchor="middle" class="ax" style="letter-spacing:0.4px">Betrag</text>
<rect x="393" y="400" width="270" height="95" fill="#000"/>
<line x1="393" y1="489.5" x2="663" y2="489.5" stroke="#0E2E0E" stroke-width="1"/>
<line x1="393" y1="483.5" x2="663" y2="483.5" stroke="#0E2E0E" stroke-width="1"/>
<line x1="393" y1="477.5" x2="663" y2="477.5" stroke="#0E2E0E" stroke-width="1"/>
<line x1="393" y1="471.5" x2="663" y2="471.5" stroke="#1F5C1F" stroke-width="1"/>
<line x1="393" y1="465.5" x2="663" y2="465.5" stroke="#0E2E0E" stroke-width="1"/>
<line x1="393" y1="459.5" x2="663" y2="459.5" stroke="#0E2E0E" stroke-width="1"/>
<line x1="393" y1="453.5" x2="663" y2="453.5" stroke="#0E2E0E" stroke-width="1"/>
<line x1="393" y1="448.5" x2="663" y2="448.5" stroke="#1F5C1F" stroke-width="1"/>
<line x1="393" y1="442.5" x2="663" y2="442.5" stroke="#0E2E0E" stroke-width="1"/>
<line x1="393" y1="436.5" x2="663" y2="436.5" stroke="#0E2E0E" stroke-width="1"/>
<line x1="393" y1="430.5" x2="663" y2="430.5" stroke="#0E2E0E" stroke-width="1"/>
<line x1="393" y1="424.5" x2="663" y2="424.5" stroke="#1F5C1F" stroke-width="1"/>
<line x1="393" y1="418.5" x2="663" y2="418.5" stroke="#0E2E0E" stroke-width="1"/>
<line x1="393" y1="412.5" x2="663" y2="412.5" stroke="#0E2E0E" stroke-width="1"/>
<line x1="393" y1="406.5" x2="663" y2="406.5" stroke="#0E2E0E" stroke-width="1"/>
<line x1="399.5" y1="400" x2="399.5" y2="495" stroke="#0E2E0E" stroke-width="1"/>
<line x1="405.5" y1="400" x2="405.5" y2="495" stroke="#0E2E0E" stroke-width="1"/>
<line x1="410.5" y1="400" x2="410.5" y2="495" stroke="#0E2E0E" stroke-width="1"/>
<line x1="415.5" y1="400" x2="415.5" y2="495" stroke="#0E2E0E" stroke-width="1"/>
<line x1="421.5" y1="400" x2="421.5" y2="495" stroke="#1F5C1F" stroke-width="1"/>
<line x1="426.5" y1="400" x2="426.5" y2="495" stroke="#0E2E0E" stroke-width="1"/>
<line x1="431.5" y1="400" x2="431.5" y2="495" stroke="#0E2E0E" stroke-width="1"/>
<line x1="437.5" y1="400" x2="437.5" y2="495" stroke="#0E2E0E" stroke-width="1"/>
<line x1="442.5" y1="400" x2="442.5" y2="495" stroke="#0E2E0E" stroke-width="1"/>
<line x1="447.5" y1="400" x2="447.5" y2="495" stroke="#1F5C1F" stroke-width="1"/>
<line x1="453.5" y1="400" x2="453.5" y2="495" stroke="#0E2E0E" stroke-width="1"/>
<line x1="458.5" y1="400" x2="458.5" y2="495" stroke="#0E2E0E" stroke-width="1"/>
<line x1="464.5" y1="400" x2="464.5" y2="495" stroke="#0E2E0E" stroke-width="1"/>
<line x1="469.5" y1="400" x2="469.5" y2="495" stroke="#0E2E0E" stroke-width="1"/>
<line x1="474.5" y1="400" x2="474.5" y2="495" stroke="#1F5C1F" stroke-width="1"/>
<line x1="480.5" y1="400" x2="480.5" y2="495" stroke="#0E2E0E" stroke-width="1"/>
<line x1="485.5" y1="400" x2="485.5" y2="495" stroke="#0E2E0E" stroke-width="1"/>
<line x1="490.5" y1="400" x2="490.5" y2="495" stroke="#0E2E0E" stroke-width="1"/>
<line x1="496.5" y1="400" x2="496.5" y2="495" stroke="#0E2E0E" stroke-width="1"/>
<line x1="501.5" y1="400" x2="501.5" y2="495" stroke="#1F5C1F" stroke-width="1"/>
<line x1="506.5" y1="400" x2="506.5" y2="495" stroke="#0E2E0E" stroke-width="1"/>
<line x1="512.5" y1="400" x2="512.5" y2="495" stroke="#0E2E0E" stroke-width="1"/>
<line x1="517.5" y1="400" x2="517.5" y2="495" stroke="#0E2E0E" stroke-width="1"/>
<line x1="523.5" y1="400" x2="523.5" y2="495" stroke="#0E2E0E" stroke-width="1"/>
<line x1="528.5" y1="400" x2="528.5" y2="495" stroke="#1F5C1F" stroke-width="1"/>
<line x1="533.5" y1="400" x2="533.5" y2="495" stroke="#0E2E0E" stroke-width="1"/>
<line x1="539.5" y1="400" x2="539.5" y2="495" stroke="#0E2E0E" stroke-width="1"/>
<line x1="544.5" y1="400" x2="544.5" y2="495" stroke="#0E2E0E" stroke-width="1"/>
<line x1="549.5" y1="400" x2="549.5" y2="495" stroke="#0E2E0E" stroke-width="1"/>
<line x1="555.5" y1="400" x2="555.5" y2="495" stroke="#1F5C1F" stroke-width="1"/>
<line x1="560.5" y1="400" x2="560.5" y2="495" stroke="#0E2E0E" stroke-width="1"/>
<line x1="566.5" y1="400" x2="566.5" y2="495" stroke="#0E2E0E" stroke-width="1"/>
<line x1="571.5" y1="400" x2="571.5" y2="495" stroke="#0E2E0E" stroke-width="1"/>
<line x1="576.5" y1="400" x2="576.5" y2="495" stroke="#0E2E0E" stroke-width="1"/>
<line x1="582.5" y1="400" x2="582.5" y2="495" stroke="#1F5C1F" stroke-width="1"/>
<line x1="587.5" y1="400" x2="587.5" y2="495" stroke="#0E2E0E" stroke-width="1"/>
<line x1="592.5" y1="400" x2="592.5" y2="495" stroke="#0E2E0E" stroke-width="1"/>
<line x1="598.5" y1="400" x2="598.5" y2="495" stroke="#0E2E0E" stroke-width="1"/>
<line x1="603.5" y1="400" x2="603.5" y2="495" stroke="#0E2E0E" stroke-width="1"/>
<line x1="608.5" y1="400" x2="608.5" y2="495" stroke="#1F5C1F" stroke-width="1"/>
<line x1="614.5" y1="400" x2="614.5" y2="495" stroke="#0E2E0E" stroke-width="1"/>
<line x1="619.5" y1="400" x2="619.5" y2="495" stroke="#0E2E0E" stroke-width="1"/>
<line x1="625.5" y1="400" x2="625.5" y2="495" stroke="#0E2E0E" stroke-width="1"/>
<line x1="630.5" y1="400" x2="630.5" y2="495" stroke="#0E2E0E" stroke-width="1"/>
<line x1="635.5" y1="400" x2="635.5" y2="495" stroke="#1F5C1F" stroke-width="1"/>
<line x1="641.5" y1="400" x2="641.5" y2="495" stroke="#0E2E0E" stroke-width="1"/>
<line x1="646.5" y1="400" x2="646.5" y2="495" stroke="#0E2E0E" stroke-width="1"/>
<line x1="651.5" y1="400" x2="651.5" y2="495" stroke="#0E2E0E" stroke-width="1"/>
<line x1="657.5" y1="400" x2="657.5" y2="495" stroke="#0E2E0E" stroke-width="1"/>
<line x1="397" y1="431" x2="663" y2="431" stroke="#fff" stroke-width="2" stroke-dasharray="2,2"/><polyline points="394.5,448 394.5,462 395.5,462 395.5,475 395.5,468 398,466 405.5,466 405.5,429 411,429 411,428 662,411" fill="none" stroke="#fff" stroke-width="1" shape-rendering="crispEdges"/><text x="537.5" y="446" text-anchor="middle" class="red">Beispielergebnis</text><line x1="387" y1="401.5" x2="392" y2="401.5" stroke="#000" stroke-width="1"/><text x="385" y="405.5" text-anchor="end" class="ax">4</text><line x1="387" y1="424.5" x2="392" y2="424.5" stroke="#000" stroke-width="1"/><text x="385" y="428.5" text-anchor="end" class="ax">2</text><line x1="387" y1="448.5" x2="392" y2="448.5" stroke="#000" stroke-width="1"/><text x="385" y="452.5" text-anchor="end" class="ax">0</text><line x1="387" y1="471.5" x2="392" y2="471.5" stroke="#000" stroke-width="1"/><text x="385" y="475.5" text-anchor="end" class="ax">-2</text><line x1="387" y1="494.5" x2="392" y2="494.5" stroke="#000" stroke-width="1"/><text x="385" y="498.5" text-anchor="end" class="ax">-4</text><line x1="394.5" y1="497" x2="394.5" y2="502" stroke="#000" stroke-width="1"/><text x="394.5" y="513" text-anchor="middle" class="ax">0</text><line x1="421.5" y1="497" x2="421.5" y2="502" stroke="#000" stroke-width="1"/><text x="421.5" y="513" text-anchor="middle" class="ax">50</text><line x1="447.5" y1="497" x2="447.5" y2="502" stroke="#000" stroke-width="1"/><text x="447.5" y="513" text-anchor="middle" class="ax">100</text><line x1="474.5" y1="497" x2="474.5" y2="502" stroke="#000" stroke-width="1"/><text x="474.5" y="513" text-anchor="middle" class="ax">150</text><line x1="501.5" y1="497" x2="501.5" y2="502" stroke="#000" stroke-width="1"/><text x="501.5" y="513" text-anchor="middle" class="ax">200</text><line x1="528.5" y1="497" x2="528.5" y2="502" stroke="#000" stroke-width="1"/><text x="528.5" y="513" text-anchor="middle" class="ax">250</text><line x1="555.5" y1="497" x2="555.5" y2="502" stroke="#000" stroke-width="1"/><text x="555.5" y="513" text-anchor="middle" class="ax">300</text><line x1="582.5" y1="497" x2="582.5" y2="502" stroke="#000" stroke-width="1"/><text x="582.5" y="513" text-anchor="middle" class="ax">350</text><line x1="608.5" y1="497" x2="608.5" y2="502" stroke="#000" stroke-width="1"/><text x="608.5" y="513" text-anchor="middle" class="ax">400</text><line x1="635.5" y1="497" x2="635.5" y2="502" stroke="#000" stroke-width="1"/><text x="635.5" y="513" text-anchor="middle" class="ax">450</text><line x1="662.5" y1="497" x2="662.5" y2="502" stroke="#000" stroke-width="1"/><text x="662.5" y="513" text-anchor="middle" class="ax">500</text><text x="526" y="527" text-anchor="middle" class="ax">Frequenz</text><text transform="translate(369,451) rotate(-90)" text-anchor="middle" class="ax">Phase (rad)</text></svg></body></html>
